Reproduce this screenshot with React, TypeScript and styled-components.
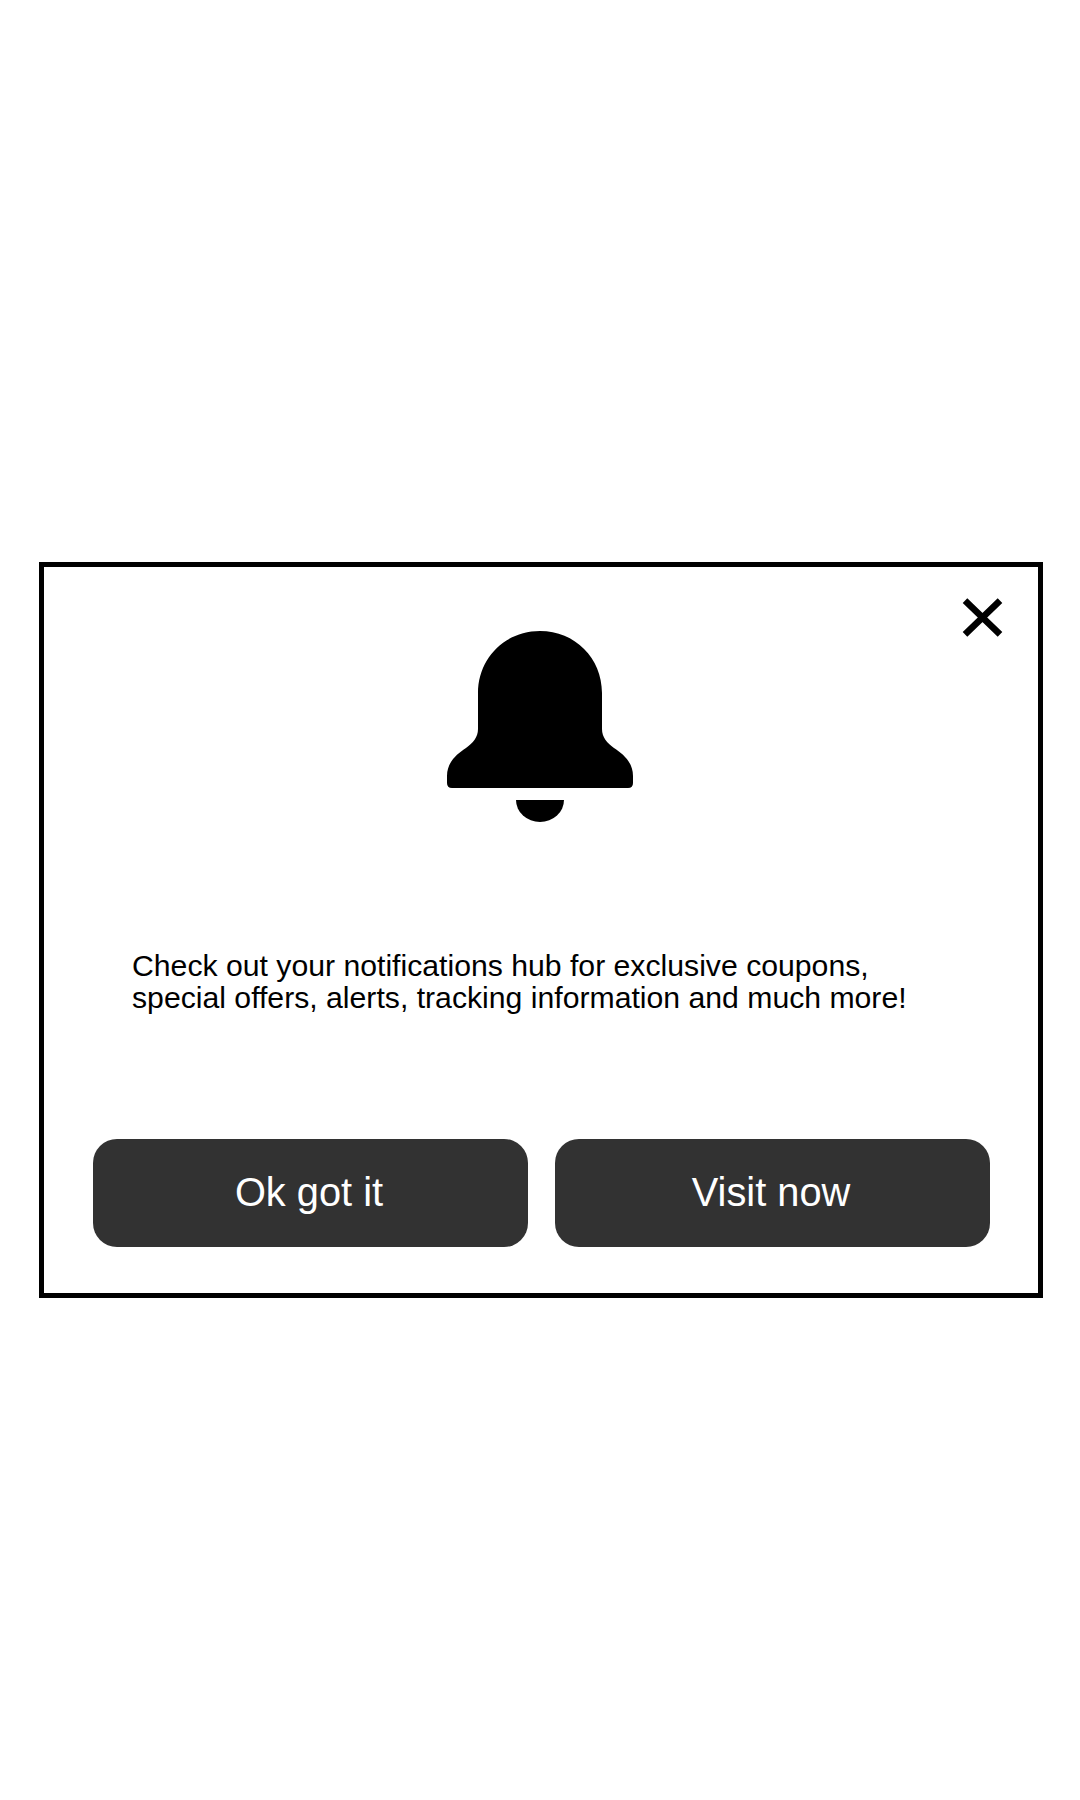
import React from "react";
import styled, { createGlobalStyle } from "styled-components";

const GlobalStyle = createGlobalStyle`
  body {
    margin: 0;
    background: #fff;
    font-family: "Liberation Sans", Arial, sans-serif;
  }
`;

const Page = styled.main`
  box-sizing: border-box;
  height: 1800px;
  padding: 562px 37px 0 39px;
`;

const Dialog = styled.section`
  box-sizing: border-box;
  width: 1004px;
  height: 736px;
  border: 5px solid #000;
  background: #fff;
  display: flex;
  flex-direction: column;
`;

const Header = styled.header`
  display: grid;
  grid-template-columns: 403px 186px 1fr;
  align-items: start;
  height: 383px;
  box-sizing: border-box;
  padding: 29px 35px 0 0;
`;

const BellIcon = styled.svg`
  grid-column: 2;
  width: 186px;
  height: 192px;
  margin-top: 35px;
`;

const CloseButton = styled.button`
  justify-self: end;
  width: 44px;
  height: 44px;
  padding: 0;
  border: 0;
  background: none;
  color: #000;
  cursor: pointer;

  svg {
    display: block;
  }
`;

const Message = styled.p`
  height: 64px;
  margin: 0 0 0 88px;
  color: #000;
  font-size: 30.2px;
  line-height: 32px;
  white-space: nowrap;
`;

const Actions = styled.div`
  display: flex;
  gap: 27px;
  margin: 125px 0 0 49px;
`;

const ActionButton = styled.button`
  width: 435px;
  height: 108px;
  padding: 0 3px 2px 0;
  border: 0;
  border-radius: 24px;
  background: #323232;
  color: #fff;
  font: 39.8px/46px "Liberation Sans", Arial, sans-serif;
  cursor: pointer;
`;

export default function App() {
  return (
    <Page>
      <GlobalStyle />
      <Dialog role="dialog">
        <Header>
          <BellIcon viewBox="0 0 186 192" aria-hidden="true">
            <path d="M31 62C31 27 58 0 93 0s62 27 62 62v36c0 8 5 14 12 19 9 6 19 14 19 28v7q0 5-5 5H5q-5 0-5-5v-7c0-14 10-22 19-28 7-5 12-11 12-19Z" />
            <path d="M69 169h48a24 22 0 0 1-48 0Z" />
          </BellIcon>
          <CloseButton aria-label="Close">
            <svg width="44" height="44" viewBox="0 0 44 44" fill="none" stroke="currentColor" strokeWidth="6.6">
              <path d="m6 4.7 35 33.6M41 4.7 6 38.3" />
            </svg>
          </CloseButton>
        </Header>
        <Message>
          Check out your notifications hub for exclusive coupons,
          <br />
          special offers, alerts, tracking information and much more!
        </Message>
        <Actions>
          <ActionButton>Ok got it</ActionButton>
          <ActionButton>Visit now</ActionButton>
        </Actions>
      </Dialog>
    </Page>
  );
}
